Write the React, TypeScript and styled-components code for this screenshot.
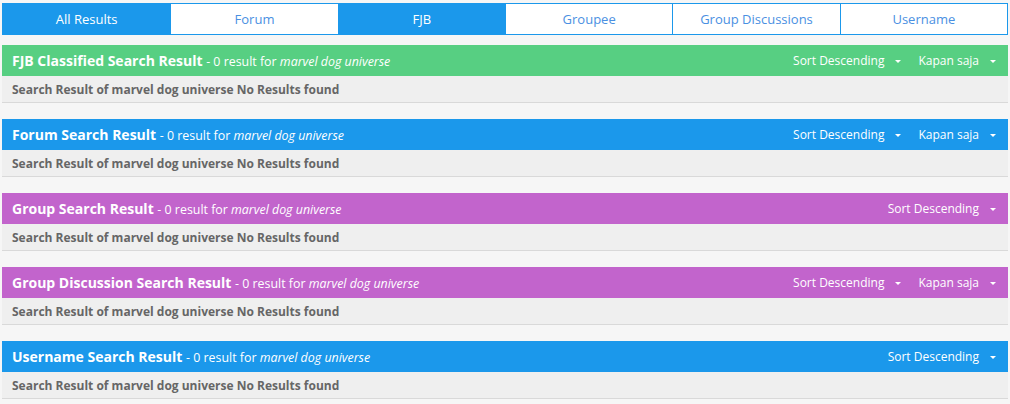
import React from "react";
import styled, { createGlobalStyle } from "styled-components";

const Global = createGlobalStyle`
  html, body { margin: 0; padding: 0; background: #f6f6f6; }
  body { font-family: "Open Sans", "Liberation Sans", sans-serif; }
`;

const Page = styled.div`
  padding: 3px 2px 0 2px;
  width: 1006px;
`;

const Tabs = styled.div`
  display: grid;
  grid-template-columns: repeat(6, 1fr);
  border: 1px solid #1b98eb;
  background: #fff;
  margin-bottom: 10px;
`;

const Tab = styled.div<{ $active?: boolean }>`
  height: 30px;
  display: flex;
  align-items: center;
  justify-content: center;
  font-size: 13px;
  color: ${(p) => (p.$active ? "#fff" : "#4a90e2")};
  background: ${(p) => (p.$active ? "#1b98eb" : "#fff")};
  & + & { border-left: 1px solid #1b98eb; }
`;

const Section = styled.div`
  margin-bottom: 16px;
`;

const Header = styled.div<{ $color: string }>`
  height: 31px;
  background: ${(p) => p.$color};
  color: #fff;
  display: flex;
  align-items: center;
  padding: 0 12px 0 10px;
`;

const Title = styled.div`
  flex: 1;
  font-size: 14px;
  font-weight: 700;
  white-space: nowrap;
`;

const Sub = styled.span`
  font-size: 12.4px;
  font-weight: 400;
`;

const Query = styled.em`
  font-style: italic;
`;

const Dropdown = styled.div`
  display: flex;
  align-items: center;
  font-size: 12px;
  margin-left: 17px;
`;

const Caret = styled.span`
  display: inline-block;
  width: 0;
  height: 0;
  border-left: 3px solid transparent;
  border-right: 3px solid transparent;
  border-top: 3px solid #fff;
  margin-left: 11px;
  margin-top: 2px;
`;

const Body = styled.div`
  height: 26px;
  background: #efefef;
  border-bottom: 1px solid #d9d9d9;
  display: flex;
  align-items: center;
  padding-left: 10px;
  font-size: 12px;
  font-weight: 700;
  color: #666;
`;

const tabs = ["All Results", "Forum", "FJB", "Groupee", "Group Discussions", "Username"];
const active = new Set(["All Results", "FJB"]);

const sections = [
  { title: "FJB Classified Search Result", color: "#57cf82", kapan: true },
  { title: "Forum Search Result", color: "#1b98eb", kapan: true },
  { title: "Group Search Result", color: "#c264cc", kapan: false },
  { title: "Group Discussion Search Result", color: "#c264cc", kapan: true },
  { title: "Username Search Result", color: "#1b98eb", kapan: false },
];

export default function App() {
  return (
    <Page>
      <Global />
      <Tabs>
        {tabs.map((t) => (
          <Tab key={t} $active={active.has(t)}>
            {t}
          </Tab>
        ))}
      </Tabs>
      {sections.map((s) => (
        <Section key={s.title}>
          <Header $color={s.color}>
            <Title>
              {s.title} <Sub>- 0 result for <Query>marvel dog universe</Query></Sub>
            </Title>
            <Dropdown>
              Sort Descending
              <Caret />
            </Dropdown>
            {s.kapan && (
              <Dropdown>
                Kapan saja
                <Caret />
              </Dropdown>
            )}
          </Header>
          <Body>Search Result of marvel dog universe No Results found</Body>
        </Section>
      ))}
    </Page>
  );
}
